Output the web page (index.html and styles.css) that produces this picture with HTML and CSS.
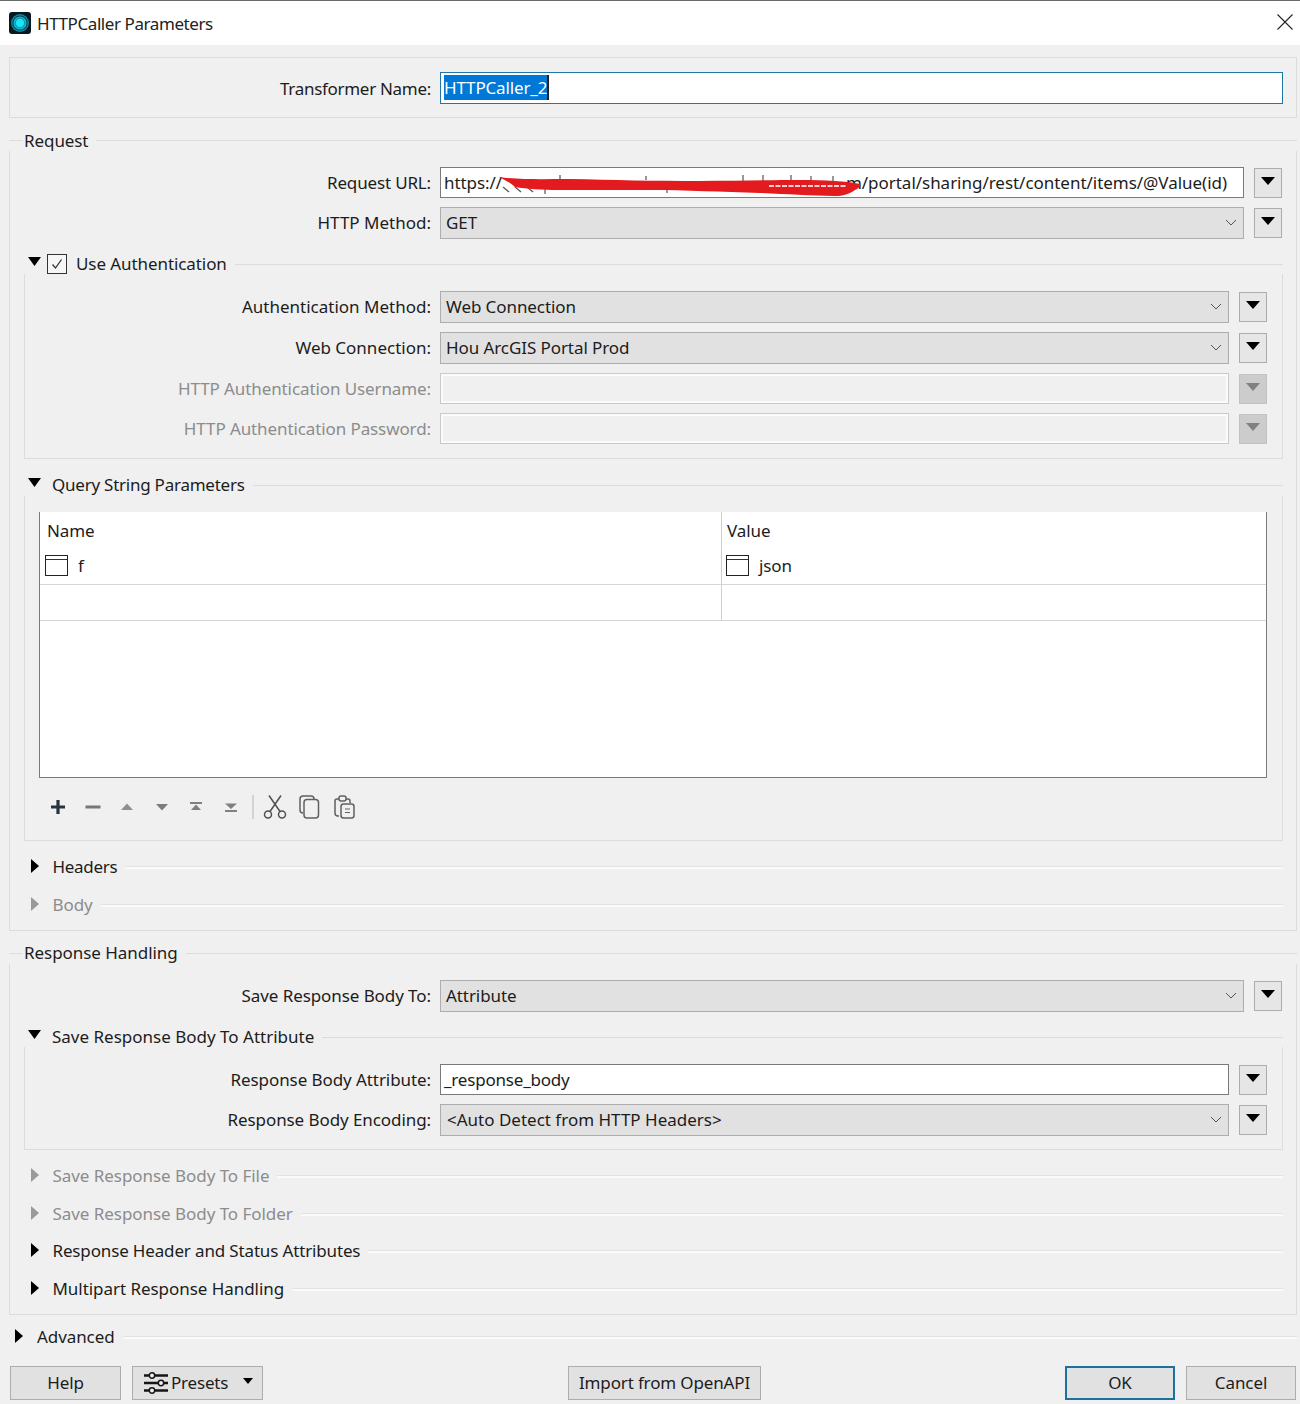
FILE: index.html
```html
<!DOCTYPE html>
<html lang="en">
<head>
<meta charset="utf-8">
<title>HTTPCaller Parameters</title>
<link rel="stylesheet" href="styles.css">
</head>
<body>
<div class="dialog">
  <header class="titlebar">
    <svg class="logo" width="22" height="22" viewBox="0 0 22 22"><rect width="22" height="22" rx="3" fill="#07181e"/><circle cx="11" cy="11" r="9" fill="#0c8aa3"/><circle cx="11" cy="11" r="7.6" fill="#0a3f4c"/><circle cx="11" cy="11" r="6.6" fill="#10b4cc"/><circle cx="11" cy="11" r="5" fill="#0c8fa8"/><circle cx="11" cy="11" r="4.2" fill="#17e4f5"/></svg>
    <span class="title">HTTPCaller Parameters</span>
    <svg class="close" width="16" height="16" viewBox="0 0 16 16"><path d="M0.5 0.5L15.5 15.5M15.5 0.5L0.5 15.5" stroke="#222" stroke-width="1.1" fill="none"/></svg>
  </header>

  <main class="main">
    <section class="namebox">
      <label class="label name-label">Transformer Name:</label>
      <div class="field focus"><span class="selected">HTTPCaller_2</span><span class="caret"></span></div>
    </section>

    <section class="group request">
      <div class="head top flat"><span class="stub"></span><span class="head-text">Request</span><span class="line"></span></div>
      <div class="group-body pad-a">
        <div class="row row-url">
          <label class="label">Request URL:</label>
          <div class="field url"><span>https://</span><span class="url-tail">m/portal/sharing/rest/content/items/@Value(id)</span>
            <svg class="scribble" width="372" height="30" viewBox="0 0 372 30"><path d="M69 3V8M155 4V8M252 3V9M272 3V9M300 3V9M320 4V9M342 4V9M54 17V22M176 17V21" stroke="#555" stroke-width="1.200"/><path d="M12 15L18 20M24 15L30 20M36 15L42 20" stroke="#555" stroke-width="1.200"/><path d="M8 5C30 8 55 7 79 7C120 8 165 9 209 9C245 9 280 8 309 8C335 8 355 9 369 12C369 15 367 17 364 18C358 22 352 24 344 24C318 24 295 22 269 21C230 20 195 18 159 18C125 18 95 18 69 18C50 18 36 17 24 15C20 11 14 8 8 5Z" fill="#e31b1f"/><path d="M278 14H356" stroke="#f6d2d2" stroke-width="2" stroke-dasharray="5 1.500"/></svg>
          </div>
          <button class="menu" type="button"><span class="tri"></span></button>
        </div>
        <div class="row row-tight">
          <label class="label">HTTP Method:</label>
          <div class="combo"><span>GET</span><svg class="chev" width="12" height="7" viewBox="0 0 12 7"><path d="M1 1L6 6L11 1" stroke="#555" fill="none"/></svg></div>
          <button class="menu" type="button"><span class="tri"></span></button>
        </div>

        <div class="head sub-head auth-head"><svg class="arrow-d" width="13" height="9" viewBox="0 0 13 9"><path d="M0 0H13L6.500 9Z"/></svg><span class="check"><svg width="18" height="18" viewBox="0 0 18 18"><path d="M4.500 9.500L7.500 13L13.500 4.500" stroke="#333" stroke-width="1.300" fill="none"/></svg></span><span class="head-text">Use Authentication</span><span class="line"></span></div>
        <div class="sub-body auth-body">
          <div class="row sub-row">
            <label class="label">Authentication Method:</label>
            <div class="combo"><span>Web Connection</span><svg class="chev" width="12" height="7" viewBox="0 0 12 7"><path d="M1 1L6 6L11 1" stroke="#555" fill="none"/></svg></div>
            <button class="menu" type="button"><span class="tri"></span></button>
          </div>
          <div class="row sub-row row-gap">
            <label class="label">Web Connection:</label>
            <div class="combo"><span>Hou ArcGIS Portal Prod</span><svg class="chev" width="12" height="7" viewBox="0 0 12 7"><path d="M1 1L6 6L11 1" stroke="#555" fill="none"/></svg></div>
            <button class="menu" type="button"><span class="tri"></span></button>
          </div>
          <div class="row sub-row row-gap">
            <label class="label off">HTTP Authentication Username:</label>
            <div class="field disabled"></div>
            <button class="menu menu-off" type="button"><span class="tri"></span></button>
          </div>
          <div class="row sub-row row-tight">
            <label class="label off">HTTP Authentication Password:</label>
            <div class="field disabled"></div>
            <button class="menu menu-off" type="button"><span class="tri"></span></button>
          </div>
        </div>

        <div class="head sub-head query-head"><svg class="arrow-d" width="13" height="9" viewBox="0 0 13 9"><path d="M0 0H13L6.500 9Z"/></svg><span class="head-text">Query String Parameters</span><span class="line"></span></div>
        <div class="sub-body query-body">
          <div class="table">
            <div class="cell hdr first">Name</div><div class="cell hdr hdr-value">Value</div>
            <div class="cell data first"><span class="cell-ic"></span>f</div><div class="cell data col2"><span class="cell-ic"></span>json</div>
            <div class="cell blank first"></div><div class="cell blank"></div>
          </div>
          <div class="toolbar">
            <svg class="tool" width="24" height="24" viewBox="0 0 24 24"><path d="M12 5V19M5 12H19" stroke="#27343c" stroke-width="3.200" fill="none"/></svg>
            <svg class="tool" width="24" height="24" viewBox="0 0 24 24"><path d="M4.500 12H19.500" stroke="#777" stroke-width="3" fill="none"/></svg>
            <svg class="tool" width="24" height="24" viewBox="0 0 24 24"><path d="M6 15L12 8.500L18 15Z" fill="#8f8f8f"/></svg>
            <svg class="tool" width="24" height="24" viewBox="0 0 24 24"><path d="M6 9L12 15.500L18 9Z" fill="#7c7c7c"/></svg>
            <svg class="tool" width="24" height="24" viewBox="0 0 24 24"><path d="M6 7H18V9H6ZM7 15L12 9.500L17 15Z" fill="#808080"/></svg>
            <svg class="tool" width="24" height="24" viewBox="0 0 24 24"><path d="M6 8.500H18L12 14ZM6 15H18V17H6Z" fill="#808080"/></svg>
            <span class="sep"></span>
            <svg class="tool cut" width="24" height="26" viewBox="0 0 24 26"><g fill="none" stroke="#505050" stroke-width="1.500"><circle cx="5" cy="20.500" r="3.500"/><circle cx="19" cy="20.500" r="3.500"/><path d="M7 17.500L18 1.500M17 17.500L6 1.500"/></g></svg>
            <svg class="tool" width="24" height="26" viewBox="0 0 24 26"><g fill="none" stroke="#606060" stroke-width="1.500"><path d="M5 19C3 19 2 18 2 16V5C2 3 3 2 5 2H13C15 2 16 3 16 5"/><rect x="6" y="5.500" width="14.500" height="18.500" rx="3" fill="#f0f0f0"/></g></svg>
            <svg class="tool" width="24" height="26" viewBox="0 0 24 26"><g fill="none" stroke="#606060" stroke-width="1.500"><path d="M6 22H5C3 22 2 21 2 19V7C2 6 3 5 4 5H15C16 5 17 6 17 7V9"/><rect x="6" y="2" width="7" height="5" rx="2" fill="#f0f0f0"/><rect x="8" y="10" width="13" height="14" rx="2.500" fill="#f0f0f0"/><path d="M12 15H17M12 18.500H17" stroke-width="1.200"/></g></svg>
          </div>
        </div>

        <div class="head closed headers-head"><svg class="arrow-r" width="8" height="14" viewBox="0 0 8 14"><path d="M0 0L8 7L0 14Z"/></svg><span class="head-text tight-text">Headers</span><span class="line bright"></span></div>
        <div class="head closed gap-38 off"><svg class="arrow-r" width="8" height="14" viewBox="0 0 8 14"><path d="M0 0L8 7L0 14Z"/></svg><span class="head-text">Body</span><span class="line bright"></span></div>
      </div>
    </section>

    <section class="group response">
      <div class="head top"><span class="stub"></span><span class="head-text">Response Handling</span><span class="line"></span></div>
      <div class="group-body pad-b">
        <div class="row row-url">
          <label class="label">Save Response Body To:</label>
          <div class="combo"><span>Attribute</span><svg class="chev" width="12" height="7" viewBox="0 0 12 7"><path d="M1 1L6 6L11 1" stroke="#555" fill="none"/></svg></div>
          <button class="menu" type="button"><span class="tri"></span></button>
        </div>

        <div class="head sub-head save-head"><svg class="arrow-d" width="13" height="9" viewBox="0 0 13 9"><path d="M0 0H13L6.500 9Z"/></svg><span class="head-text">Save Response Body To Attribute</span><span class="line"></span></div>
        <div class="sub-body save-body">
          <div class="row sub-row">
            <label class="label">Response Body Attribute:</label>
            <div class="field plain">_response_body</div>
            <button class="menu" type="button"><span class="tri"></span></button>
          </div>
          <div class="row sub-row row-tight">
            <label class="label">Response Body Encoding:</label>
            <div class="combo combo-enc"><span>&lt;Auto Detect from HTTP Headers&gt;</span><svg class="chev" width="12" height="7" viewBox="0 0 12 7"><path d="M1 1L6 6L11 1" stroke="#555" fill="none"/></svg></div>
            <button class="menu" type="button"><span class="tri"></span></button>
          </div>
        </div>

        <div class="head closed file-head off"><svg class="arrow-r" width="8" height="14" viewBox="0 0 8 14"><path d="M0 0L8 7L0 14Z"/></svg><span class="head-text">Save Response Body To File</span><span class="line bright"></span></div>
        <div class="head closed gap-38 off"><svg class="arrow-r" width="8" height="14" viewBox="0 0 8 14"><path d="M0 0L8 7L0 14Z"/></svg><span class="head-text">Save Response Body To Folder</span><span class="line bright"></span></div>
        <div class="head closed gap-37"><svg class="arrow-r" width="8" height="14" viewBox="0 0 8 14"><path d="M0 0L8 7L0 14Z"/></svg><span class="head-text long-text">Response Header and Status Attributes</span><span class="line bright"></span></div>
        <div class="head closed gap-38"><svg class="arrow-r" width="8" height="14" viewBox="0 0 8 14"><path d="M0 0L8 7L0 14Z"/></svg><span class="head-text">Multipart Response Handling</span><span class="line bright"></span></div>
      </div>
    </section>

    <div class="head closed advanced"><svg class="arrow-r" width="8" height="14" viewBox="0 0 8 14"><path d="M0 0L8 7L0 14Z"/></svg><span class="head-text">Advanced</span><span class="line bright"></span></div>
  </main>

  <footer class="footer">
    <button class="btn help" type="button">Help</button>
    <button class="btn presets" type="button">
      <svg width="25" height="24" viewBox="0 0 25 24"><g stroke="#151515" fill="#f0f0f0" stroke-width="1.500"><path d="M0 4.500H24M0 12H24M0 19.500H24" stroke-width="2.600"/><circle cx="8" cy="4.500" r="2.700"/><circle cx="17" cy="12" r="2.700"/><circle cx="8" cy="19.500" r="2.700"/></g></svg>
      <span class="presets-text">Presets</span>
      <span class="presets-caret"></span>
    </button>
    <button class="btn import" type="button">Import from OpenAPI</button>
    <button class="btn ok" type="button">OK</button>
    <button class="btn cancel" type="button">Cancel</button>
  </footer>
</div>
</body>
</html>
```
FILE: styles.css
```css
* { box-sizing: border-box; }
html, body { margin: 0; padding: 0; }
body {
  width: 1300px;
  height: 1404px;
  overflow: hidden;
  background: #f0f0f0;
  font-family: "Noto Sans", "Open Sans", sans-serif;
  font-size: 17px;
  letter-spacing: -0.08px;
  color: #1c1c1c;
}
.dialog { width: 1300px; height: 1404px; display: flex; flex-direction: column; }

.titlebar {
  height: 45px;
  flex: none;
  background: #fff;
  border-top: 1px solid #6a6a6a;
  display: flex;
  align-items: center;
  padding: 0 7px 0 9px;
}
.title { margin-left: 6px; color: #222; letter-spacing: -0.42px; }
.logo { flex: none; margin-top: -1px; }
.close { margin-left: auto; margin-top: -2px; }

.main { padding: 12px 3px 0 9px; }

.namebox {
  height: 61px;
  border: 1px solid #dcdcdc;
  display: flex;
  align-items: center;
  padding-right: 13px;
}

.label { flex: none; text-align: right; white-space: nowrap; letter-spacing: 0; }
.label.off { color: #8c8c8c; letter-spacing: -0.1px; }
.namebox .name-label { width: 421px; margin-right: 9px; padding-top: 2px; letter-spacing: -0.3px; }
.request .row-url .label { letter-spacing: -0.16px; }
.response .label { letter-spacing: -0.08px; }

.field {
  flex: 1;
  height: 32px;
  background: #fff;
  border: 1px solid #7a7a7a;
  display: flex;
  align-items: center;
  padding-left: 3px;
  white-space: nowrap;
  min-width: 0;
}
.focus { border-color: #1f77a8; }
.selected { background: #0078d7; color: #fff; line-height: 24px; letter-spacing: -0.15px; padding-top: 1px; }
.caret { width: 2px; height: 25px; background: #222; }
.url { position: relative; height: 31px; }
.url-tail { margin-left: auto; padding-right: 16px; letter-spacing: -0.03px; }
.scribble { position: absolute; left: 50px; top: 4px; }
.plain { padding-left: 3px; height: 31px; letter-spacing: -0.2px; }
.disabled {
  height: 31px;
  background: #f0f0f0;
  border: 1px solid #c9c9c9;
  box-shadow: inset 0 0 0 2px #fbfbfb;
}

.combo {
  flex: 1;
  height: 32px;
  background: #e1e1e1;
  border: 1px solid #adadad;
  display: flex;
  align-items: center;
  justify-content: space-between;
  padding: 0 6px 2px 5px;
  white-space: nowrap;
  min-width: 0;
}
.combo-enc { padding-left: 6px; letter-spacing: 0; }
.chev { flex: none; margin-top: 1px; }

.menu {
  flex: none;
  width: 28px;
  height: 30px;
  margin: 1px 0 0 10px;
  padding: 0;
  background: #e6e6e6;
  border: 1px solid #adadad;
  display: flex;
  align-items: center;
  justify-content: center;
}
.tri {
  width: 0;
  height: 0;
  border-left: 7px solid transparent;
  border-right: 7px solid transparent;
  border-top: 8px solid #000;
  margin-top: -4px;
}
.menu-off { background: #cccccc; border-color: #c2c2c2; }
.menu-off .tri { border-top-color: #808080; }

.group { margin-top: 12px; }
.request { margin-top: 12px; }
.head { display: flex; align-items: center; height: 21px; white-space: nowrap; }
.head-text { flex: none; margin-top: -2px; }
.flat .head-text { margin-top: 0; }
.line { flex: 1; height: 1px; background: #dcdcdc; margin-left: 8px; min-width: 0; }
.line.bright { height: 2px; background: #fafafa; box-shadow: 0 -1px 0 #e2e2e2; }
.stub { width: 14px; height: 1px; background: #dcdcdc; flex: none; }
.top .head-text { margin-left: 1px; }
.response .head-text { letter-spacing: -0.05px; }
.response .long-text { letter-spacing: -0.15px; }
.request .tight-text { letter-spacing: -0.3px; }

.group-body {
  border-left: 1px solid #dcdcdc;
  border-right: 1px solid #dcdcdc;
  border-bottom: 1px solid #dcdcdc;
  padding-left: 14px;
  padding-right: 13px;
}
.pad-a { height: 780px; padding-top: 16px; }
.pad-b { height: 351px; padding-top: 16px; }

.row { display: flex; align-items: flex-start; margin-right: 1px; }
.row .label { width: 407px; margin-right: 9px; line-height: 32px; }
.row-gap { margin-top: 9px; }
.row-tight { margin-top: 8px; }
.sub-row { margin-right: 15px; }
.sub-row .label { width: 406px; }

.sub-head .arrow-d { flex: none; margin: -6px 0 0 4px; fill: #000; }
.auth-head { margin-top: 15px; height: 20px; }
.query-head { margin-top: 16px; height: 21px; }
.save-head { margin-top: 15px; height: 20px; }
.query-head .head-text, .save-head .head-text { margin-left: 11px; }
.query-head .head-text { letter-spacing: -0.24px; }
.response .save-head .head-text { letter-spacing: 0; }
.auth-head .head-text { margin-left: 9px; }
.check {
  flex: none;
  width: 20px;
  height: 20px;
  margin-left: 6px;
  background: #f6f6f6;
  border: 1px solid #333;
  display: flex;
}
.check svg { display: block; }

.sub-body {
  border-left: 1px solid #dcdcdc;
  border-right: 1px solid #dcdcdc;
  border-bottom: 1px solid #dcdcdc;
}
.auth-body { height: 185px; padding-top: 17px; }
.query-body { height: 345px; padding-top: 16px; }
.save-body { height: 103px; padding-top: 17px; }

.table {
  margin: 0 15px 0 14px;
  height: 266px;
  background: #fff;
  border-left: 1px solid #7a7a7a;
  border-right: 1px solid #7a7a7a;
  border-bottom: 1px solid #7a7a7a;
  display: grid;
  grid-template-columns: 682px 1fr;
  grid-template-rows: 37px 36px 36px;
}
.cell { display: flex; align-items: center; padding-left: 7px; }
.hdr-value { padding-left: 5px; }
.first { border-right: 1px solid #cfcfcf; }
.data { border-bottom: 1px solid #d6d6d6; padding-left: 5px; padding-bottom: 2px; }
.col2 { padding-left: 4px; }
.blank { border-bottom: 1px solid #d6d6d6; }
.cell-ic {
  flex: none;
  width: 23px;
  height: 21px;
  margin-right: 10px;
  border: 1px solid #222;
  background: linear-gradient(#fff 3px, #333 3px, #333 4px, #fff 4px);
}

.toolbar { display: flex; align-items: center; height: 58px; padding: 0 0 0 21px; }
.tool { flex: none; margin-right: 10.6px; }
.sep { flex: none; width: 2px; height: 24px; background: #d2d2d2; margin: 0 9px 0 -2px; }
.cut + .tool, .cut { margin-right: 11px; }

.closed .arrow-r { flex: none; margin: -4px 0 0 7px; fill: #000; }
.closed .head-text { margin-left: 13.5px; }
.off .arrow-r { fill: #9a9a9a; }
.closed.off { color: #8c8c8c; }
.headers-head { margin-top: 16px; }
.gap-38 { margin-top: 17px; }
.gap-37 { margin-top: 16px; }
.file-head { margin-top: 16px; }

.advanced { margin-top: 12px; }
.advanced .arrow-r { margin-left: 6px; }
.advanced .head-text { margin-left: 14px; }

.footer {
  display: flex;
  margin-top: 18px;
  padding: 0 4px 0 10px;
  height: 34px;
  flex: none;
}
.btn {
  height: 34px;
  background: #e1e1e1;
  border: 1px solid #adadad;
  font: inherit;
  letter-spacing: -0.08px;
  color: #1c1c1c;
  padding: 0 0 2px;
  display: flex;
  align-items: center;
  justify-content: center;
}
.help { width: 111px; }
.presets { width: 131px; margin-left: 11px; justify-content: flex-start; padding-left: 11px; }
.presets svg { flex: none; margin-top: 2px; }
.presets-text { margin-left: 2px; letter-spacing: -0.2px; }
.presets-caret {
  width: 0; height: 0;
  margin: -2px 0 0 auto;
  margin-right: 9px;
  border-left: 5px solid transparent;
  border-right: 5px solid transparent;
  border-top: 6px solid #000;
}
.import { width: 193px; margin-left: 305px; letter-spacing: -0.15px; }
.ok { width: 110px; margin-left: auto; border: 2px solid #1f6f9f; }
.cancel { width: 110px; margin-left: 11px; }
```
